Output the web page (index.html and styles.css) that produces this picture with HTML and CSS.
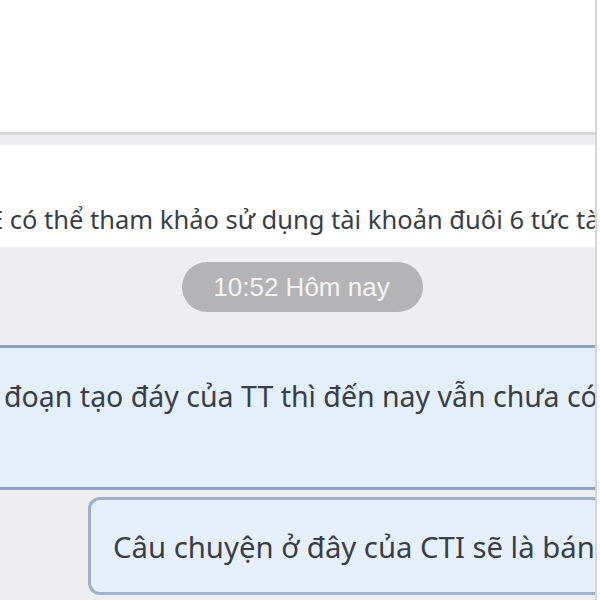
FILE: index.html
```html
<!DOCTYPE html>
<html lang="vi">
<head>
  <meta charset="UTF-8">
  <title>Chat</title>
  <link rel="stylesheet" href="styles.css">
</head>
<body>
  <div class="chat">
    <div class="msg msg-prev"></div>
    <div class="msg msg-white">
      <p class="text text-first">E có thể tham khảo sử dụng tài khoản đuôi 6 tức tài khoản</p>
    </div>
    <div class="time-row">
      <span class="time-pill">10:52 Hôm nay</span>
    </div>
    <div class="msg msg-blue">
      <p class="text text-big">đoạn tạo đáy của TT thì đến nay vẫn chưa có</p>
    </div>
    <div class="msg msg-mine">
      <p class="text text-mine">Câu chuyện ở đây của CTI sẽ là bán hàng</p>
    </div>
  </div>
</body>
</html>
```

FILE: styles.css
```css
body {
  margin: 0;
  background-color: #fff;
  font-family: "Noto Sans", "Open Sans", sans-serif;
  overflow: hidden;
  height: 600px;
}
.chat {
  width: 595px;
  height: 600px;
  background-color: #eeeef1;
  border-right: 2px solid #d6d6da;
  overflow: hidden;
}
.msg {
  box-sizing: border-box;
  white-space: nowrap;
  overflow: hidden;
}
.msg-prev {
  height: 135px;
  background-color: #fff;
  border-bottom: 3px solid #d8d8dc;
  margin-bottom: 10px;
}
.msg-white {
  background-color: #fff;
  height: 102px;
  padding-top: 57px;
}
.text {
  margin: 0;
  color: #393e46;
  font-size: 25.5px;
  line-height: 34px;
}
.text-first {
  margin-left: -11px;
}
.text-big {
  font-size: 28.5px;
  line-height: 36px;
}
.text-mine {
  font-size: 29.3px;
  line-height: 36px;
}
.time-row {
  height: 98px;
  display: flex;
  justify-content: center;
  align-items: flex-start;
  padding: 15px 0 0 10px;
  box-sizing: border-box;
}
.time-pill {
  background-color: #b4b4b6;
  color: #f4f4f4;
  font-family: "Liberation Sans", Arial, sans-serif;
  font-size: 26px;
  height: 50px;
  line-height: 50px;
  padding: 0 33px 0 31px;
  border-radius: 25px;
}
.msg-blue {
  height: 145px;
  background-color: #e4effc;
  border-top: 3px solid #8ea3c4;
  border-bottom: 3px solid #8ea3c4;
  padding: 30px 0 0 4px;
}
.msg-mine {
  margin: 7px 0 0 88px;
  height: 98px;
  width: 560px;
  background-color: #e6f0fc;
  border: 3px solid #9db1cf;
  border-right: none;
  border-radius: 12px 0 0 12px;
  padding: 29px 0 0 22px;
}
```
